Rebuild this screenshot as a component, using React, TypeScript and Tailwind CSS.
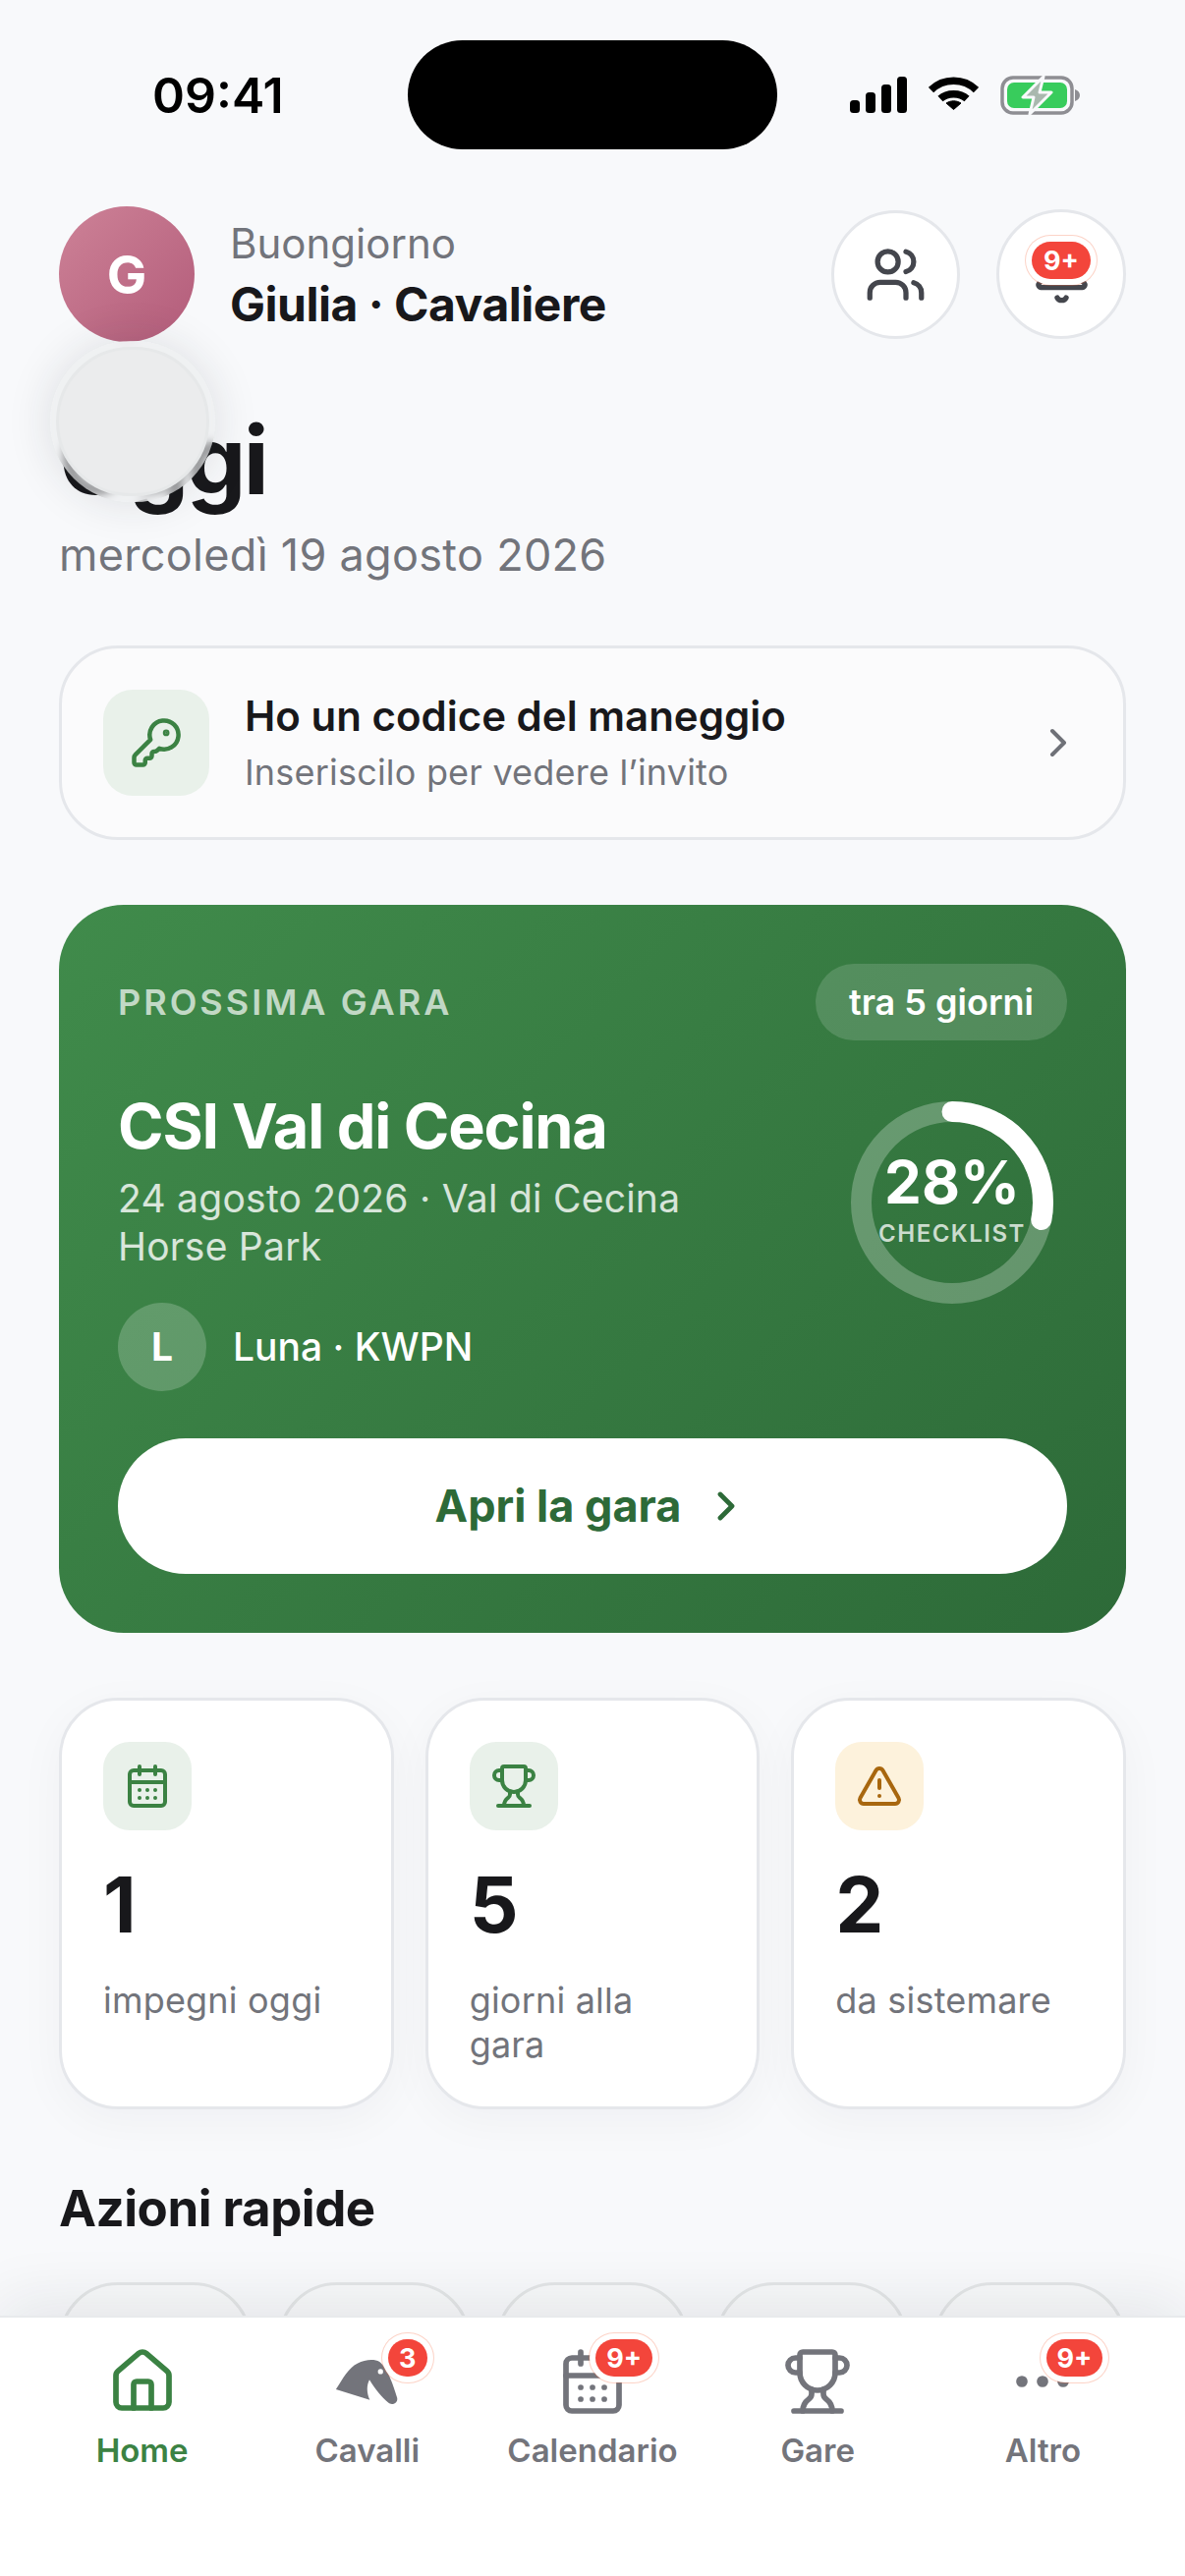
// App.tsx - home "Oggi" for the rider app
import { Bell, CalendarDays, ChevronRight, Ellipsis, House, KeyRound, TriangleAlert, Trophy, Users } from "lucide-react";
import type { ReactNode } from "react";

function Badge({ label, className = "" }: { label: string; className?: string }) {
  return (
    <span
      className={`absolute flex h-[38px] min-w-[40px] items-center justify-center rounded-full bg-[#f3453b] px-[11px] text-[27px] leading-none font-bold text-white shadow-[0_0_0_6px_#fff,0_0_0_7px_rgba(244,110,70,0.3)] ${className}`}
    >
      {label}
    </span>
  );
}

function StatusIcons() {
  return (
    <div className="ml-[74px] flex items-center gap-[22px]">
      <svg width="58" height="37" viewBox="0 0 58 37" fill="#000">
        <rect x="0" y="24" width="10" height="13" rx="3.5" />
        <rect x="16" y="16" width="10" height="21" rx="3.5" />
        <rect x="32" y="8" width="10" height="29" rx="3.5" />
        <rect x="48" y="0" width="10" height="37" rx="3.5" />
      </svg>
      <svg width="51" height="37" viewBox="0 0 51 37" fill="none" stroke="#000" strokeWidth="7.5">
        <path d="M2.5 13.5C15 1 36 1 48.5 13.5" />
        <path d="M12 22.500C19 16 32 16 39 22.500" />
        <path d="M18 27L25.500 33.500L33 27C28 24 23 24 18 27Z" fill="#000" strokeWidth="1" />
      </svg>
      <svg width="82" height="40" viewBox="0 0 82 40" fill="none">
        <rect x="2" y="2" width="71" height="36" rx="11" stroke="#8e8e93" strokeWidth="3.500" />
        <rect x="7" y="7" width="61" height="26" rx="7" fill="#38cc5c" />
        <path d="M76 14c3 1 5 3 5 6s-2 5-5 6z" fill="#8e8e93" />
        <path
          d="M44 1L23 22h11l-4 17 22-22H40z"
          fill="#a9b8ae"
          stroke="#f8f9fb"
          strokeWidth="3"
          strokeLinejoin="round"
        />
      </svg>
    </div>
  );
}

function HorseIcon() {
  return (
    <svg width="70" height="53" viewBox="120 180 210 160" fill="#73747b">
      <path d="M128 283C150 250 165 218 195 203C215 192 245 188 262 198C285 215 305 270 316 308C320 325 300 334 288 323C270 306 250 285 231 253C222 270 222 292 232 315Z" />
      <circle cx="265" cy="228" r="8" fill="#fff" />
    </svg>
  );
}

const STATS = [
  { value: "1", label: "impegni oggi", tint: "bg-[#e9f1ea] text-[#3b8243]", icon: <CalendarDays size={48} strokeWidth={2} /> },
  { value: "5", label: "giorni alla gara", tint: "bg-[#e9f1ea] text-[#3b8243]", icon: <Trophy size={48} strokeWidth={2} /> },
  { value: "2", label: "da sistemare", tint: "bg-[#fdf2dc] text-[#a8670f]", icon: <TriangleAlert size={48} strokeWidth={2} /> },
];

const TABS: { label: string; icon: ReactNode; badge?: string; active?: boolean }[] = [
  { label: "Home", icon: <House size={72} strokeWidth={1.9} />, active: true },
  { label: "Cavalli", icon: <HorseIcon />, badge: "3" },
  { label: "Calendario", icon: <CalendarDays size={72} strokeWidth={1.9} />, badge: "9+" },
  { label: "Gare", icon: <Trophy size={72} strokeWidth={1.9} /> },
  { label: "Altro", icon: <Ellipsis size={72} strokeWidth={1.9} />, badge: "9+" },
];

function ProgressRing({ percent }: { percent: number }) {
  const r = 92.5;
  const c = 2 * Math.PI * r;
  return (
    <div className="relative mt-[15px] mr-[14px] h-[206px] w-[206px] shrink-0">
      <svg width="206" height="206" viewBox="0 0 206 206" fill="none" className="-rotate-90">
        <circle cx="103" cy="103" r={r} stroke="rgba(255,255,255,0.25)" strokeWidth="21" />
        <circle
          cx="103"
          cy="103"
          r={r}
          stroke="#fff"
          strokeWidth="21"
          strokeLinecap="round"
          strokeDasharray={`${(c * percent) / 100} ${c}`}
        />
      </svg>
      <div className="absolute inset-0 flex flex-col items-center justify-center pb-[10px]">
        <div className="text-[60px] leading-[70px] font-bold text-white">{percent}%</div>
        <div className="mt-[3px] text-[24px] leading-[30px] font-semibold tracking-[1.5px] text-white/75">CHECKLIST</div>
      </div>
    </div>
  );
}

export default function App() {
  return (
    <div className="relative flex h-[2622px] w-[1206px] flex-col overflow-hidden bg-[#f8f9fb] font-['Inter',sans-serif]">
      {/* status bar */}
      <div className="flex h-[210px] shrink-0 items-start pt-[41px] pl-[155px]">
        <div className="flex h-[111px] w-[260px] items-center text-[50px] leading-none font-semibold text-black">09:41</div>
        <div className="h-[111px] w-[376px] rounded-full bg-black" />
        <div className="flex h-[111px] items-center">
          <StatusIcons />
        </div>
      </div>

      <div className="min-h-0 flex-1 overflow-hidden px-[60px]">
        {/* header */}
        <div className="flex h-[138px] items-center">
          <div className="flex h-[138px] w-[138px] items-center justify-center rounded-full bg-[linear-gradient(135deg,#cd8297,#b35c7a)] text-[54px] font-bold text-white">
            G
          </div>
          <div className="ml-[36px] flex-1">
            <div className="text-[42px] leading-[60px] text-[#72747b]">Buongiorno</div>
            <div className="mt-[2px] text-[48px] leading-[60px] font-bold tracking-[-0.5px] text-[#18181b]">Giulia · Cavaliere</div>
          </div>
          <div className="flex h-[131px] w-[131px] items-center justify-center rounded-full border-[3px] border-[#e5e7eb] bg-white text-[#44464d]">
            <Users size={63} strokeWidth={2} />
          </div>
          <div className="relative ml-[37px] flex h-[132px] w-[132px] items-center justify-center rounded-full border-[3px] border-[#e5e7eb] bg-white text-[#44464d]">
            <Bell size={63} strokeWidth={2} />
            <Badge label="9+" className="top-[30px] left-[33px] w-[60px]" />
          </div>
        </div>

        {/* title */}
        <div className="relative mt-[67px]">
          <h1 className="text-[96px] leading-[106px] font-bold tracking-[-2.5px] text-[#18181b]">Oggi</h1>
          <div className="mt-[17px] text-[45px] leading-[54px] tracking-[0.3px] text-[#72747b]">mercoledì 19 agosto 2026</div>
          {/* floating glass blob: blurred halo, then the ball itself */}
          <div className="absolute top-[-68px] left-[-9px] h-[164px] w-[168px] rounded-full bg-[#e9ebec]/60 shadow-[0_0_46px_rgba(30,40,50,0.13)] backdrop-blur-[5px]" />
          <div className="absolute top-[-62px] left-[-3px] h-[152px] w-[156px] rounded-full border-[3px] border-[#e6e8e9] bg-[#ebeced]" />
        </div>

        {/* invite code */}
        <div className="mt-[65px] flex h-[198px] items-center rounded-[60px] border-[3px] border-[#e5e7eb] bg-[#fbfbfc] pr-[42px] pl-[42px]">
          <div className="flex h-[108px] w-[108px] items-center justify-center rounded-[30px] bg-[#e9f1ea] text-[#3b8243]">
            <KeyRound size={54} strokeWidth={2} />
          </div>
          <div className="ml-[36px] flex-1">
            <div className="text-[42px] leading-[56px] font-semibold text-[#18181b]">Ho un codice del maneggio</div>
            <div className="mt-[3px] text-[36px] leading-[52px] tracking-[0.2px] text-[#72747b]">Inseriscilo per vedere l’invito</div>
          </div>
          <ChevronRight size={48} strokeWidth={2} className="text-[#6f7178]" />
        </div>

        {/* next competition */}
        <div className="mt-[66px] rounded-[66px] bg-[linear-gradient(135deg,#408b4b,#2d6a38)] p-[60px]">
          <div className="flex h-[78px] items-center justify-between">
            <div className="text-[36px] font-semibold tracking-[3px] text-white/70">PROSSIMA GARA</div>
            <div className="flex h-[78px] w-[256px] items-center justify-center rounded-full bg-white/15 text-[36px] font-semibold text-white">
              tra 5 giorni
            </div>
          </div>
          <div className="mt-[47px] flex justify-between">
            <div>
              <div className="text-[63px] leading-[80px] font-bold tracking-[-1.2px] text-white">CSI Val di Cecina</div>
              <div className="mt-[9px] w-[620px] text-[39px] leading-[49px] tracking-[0.25px] text-white/80">24 agosto 2026 · Val di Cecina Horse Park</div>
              <div className="mt-[33px] flex items-center">
                <div className="flex h-[90px] w-[90px] items-center justify-center rounded-full bg-white/20 text-[39px] font-bold text-white">L</div>
                <div className="ml-[27px] text-[39px] font-medium text-white">Luna · KWPN</div>
              </div>
            </div>
            <ProgressRing percent={28} />
          </div>
          <div className="mt-[48px] flex h-[138px] items-center justify-center gap-[22px] rounded-full bg-white text-[45px] font-bold text-[#2d6a38]">
            Apri la gara
            <ChevronRight size={48} strokeWidth={2.4} />
          </div>
        </div>

        {/* stats */}
        <div className="mt-[66px] grid grid-cols-3 gap-[32px]">
          {STATS.map((stat) => (
            <div
              key={stat.label}
              className="h-[419px] rounded-[60px] border-[3px] border-[#e5e7eb] bg-white p-[42px] shadow-[0_12px_48px_rgba(20,30,40,0.04)]"
            >
              <div className={`flex h-[90px] w-[90px] items-center justify-center rounded-[27px] ${stat.tint}`}>{stat.icon}</div>
              <div className="mt-[29px] text-[78px] leading-[94px] font-bold text-[#18181b]">{stat.value}</div>
              <div className="mt-[28px] text-[36px] leading-[45px] tracking-[0.2px] text-[#72747b]">{stat.label}</div>
            </div>
          ))}
        </div>

        {/* quick actions, cut off by the tab bar */}
        <h2 className="mt-[70px] text-[51px] leading-[62px] font-bold tracking-[-0.5px] text-[#18181b]">Azioni rapide</h2>
        <div className="mt-[44px] flex justify-between">
          {[0, 1, 2, 3, 4].map((i) => (
            <div key={i} className="h-[196px] w-[196px] rounded-[60px] border-[3px] border-[#e4e6e7] bg-[#f8f9fa]" />
          ))}
        </div>
      </div>

      {/* tab bar */}
      <div className="relative grid h-[265px] shrink-0 grid-cols-5 border-t-[2px] border-[#e8eaec] bg-white px-[30px] pt-[29px] shadow-[0_-12px_60px_rgba(20,30,40,0.09)]">
        {TABS.map((tab) => (
          <div key={tab.label} className={`flex flex-col items-center ${tab.active ? "text-[#3b8243]" : "text-[#73747b]"}`}>
            <div className="relative flex h-[72px] w-[72px] items-center justify-center">
              {tab.icon}
              {tab.badge && <Badge label={tab.badge} className="top-[-7px] right-[-25px]" />}
            </div>
            <div className="mt-[12px] text-[33px] leading-[44px] font-semibold">{tab.label}</div>
          </div>
        ))}
      </div>
    </div>
  );
}
